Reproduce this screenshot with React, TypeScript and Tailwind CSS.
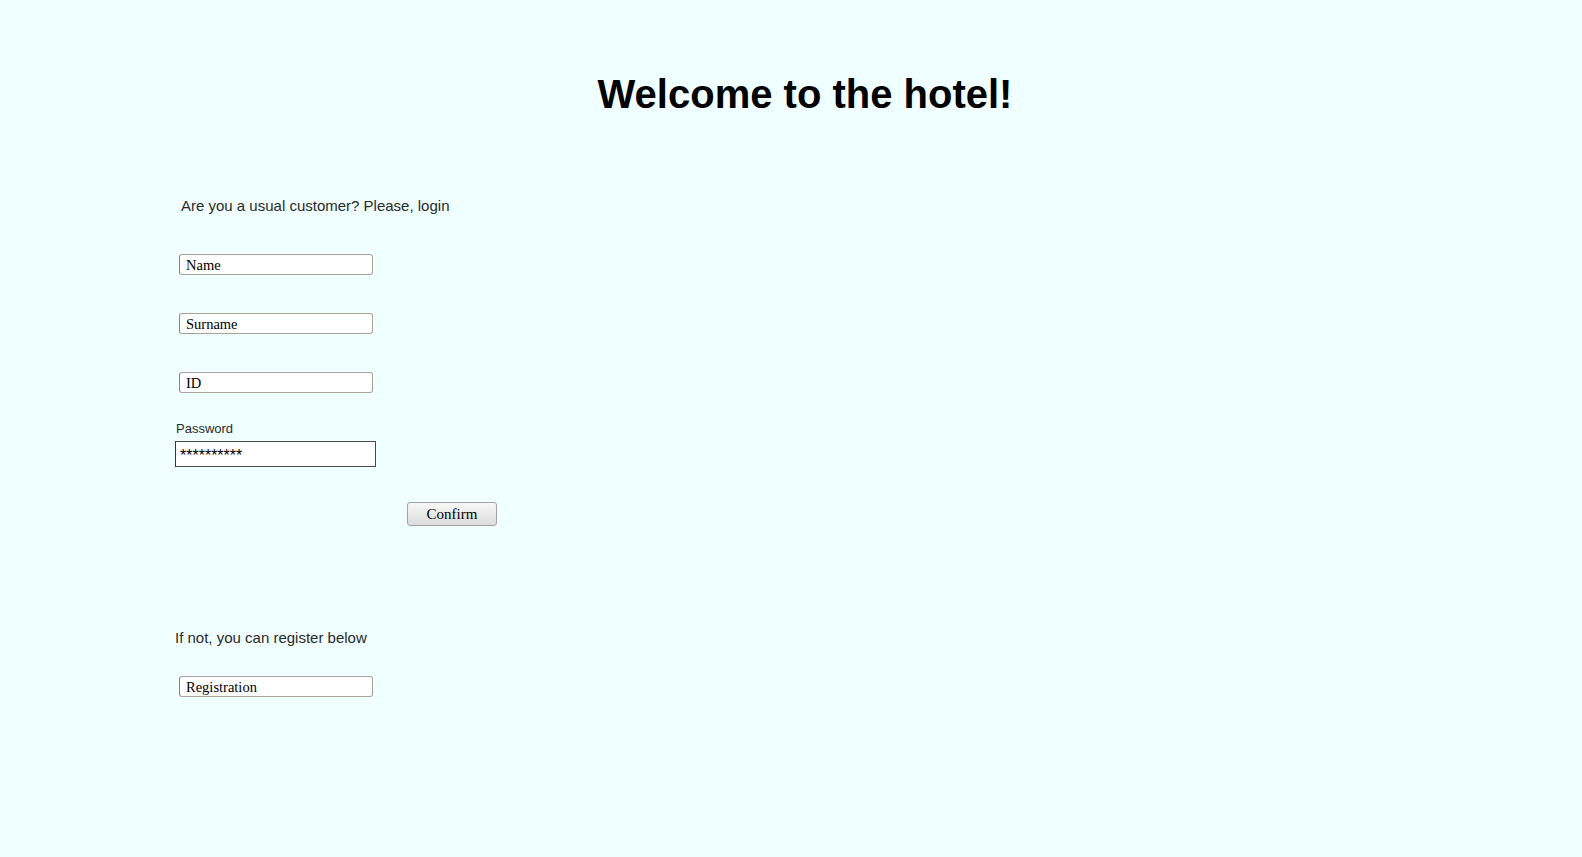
import React from "react";

const inputCls =
  "block h-[21px] w-[194px] ml-[179px] rounded-[3px] border border-[#a9a297] border-l-[#8f877a] bg-white pl-[6px] pr-[4px] pt-[2px] text-[14.5px] leading-[17px] text-black outline-none [font-family:'Liberation_Serif','Times_New_Roman',serif]";

export default function App() {
  return (
    <div className="min-h-[857px] w-full bg-[#f0ffff] pb-[40px] text-[#2a2a2a] [font-family:'Liberation_Sans',Arial,sans-serif]">
      <h1 className="pt-[71px] pl-[28px] text-center text-[40px] font-bold leading-[46px] text-black">
        Welcome to the hotel!
      </h1>
      <div className="flex flex-col items-start">
        <p className="ml-[181px] mt-[80px] text-[15px] leading-[17px]">
          Are you a usual customer? Please, login
        </p>
        <input className={inputCls + " mt-[40px]"} defaultValue="Name" readOnly />
        <input className={inputCls + " mt-[38px]"} defaultValue="Surname" readOnly />
        <input className={inputCls + " mt-[38px]"} defaultValue="ID" readOnly />
        <label className="ml-[176px] mt-[28px] text-[13px] leading-[15px]">
          Password
        </label>
        <div className="ml-[175px] mt-[5px] flex h-[26px] w-[201px] items-center border border-[#4a4a4a] border-l-[#333] bg-white pl-[4px] text-[16px] leading-[16px] text-black [font-family:'Liberation_Sans',Arial,sans-serif]">
          <span className="mt-[4px]">**********</span>
        </div>
        <button className="ml-[407px] mt-[35px] h-[24px] w-[90px] rounded-[3px] border border-[#a3a3a3] bg-gradient-to-b from-[#f8f8f8] to-[#dcdcdc] text-[15px] leading-[20px] text-black [font-family:'Liberation_Serif','Times_New_Roman',serif]">
          Confirm
        </button>
        <p className="ml-[175px] mt-[103px] text-[15px] leading-[17px]">
          If not, you can register below
        </p>
        <input className={inputCls + " mt-[30px]"} defaultValue="Registration" readOnly />
      </div>
    </div>
  );
}
